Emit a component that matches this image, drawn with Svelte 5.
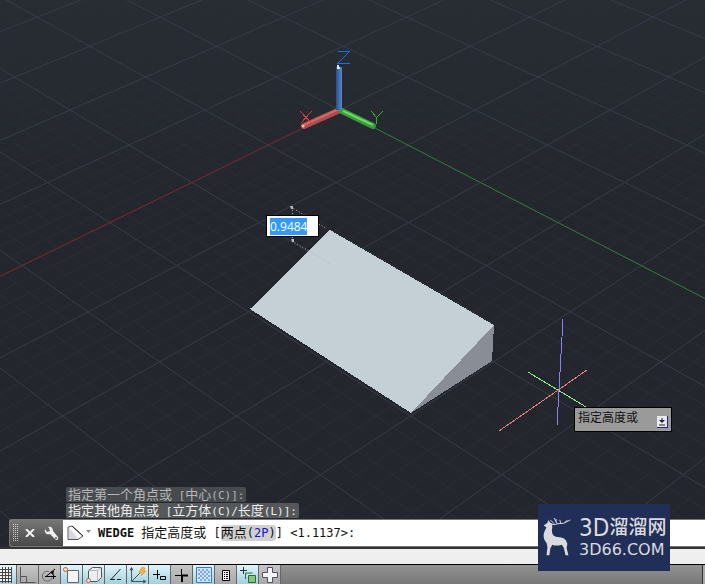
<script lang="ts">
  import { onMount } from "svelte";

  type Point = [number, number];
  type Line = { a: Point; b: Point };

  // Perspective of the ground plane: i runs along X, j runs along Y.
  function project(i: number, j: number): Point {
    const s = i + j;
    const w = 1 - 0.032 * s;
    return [(340 - 12.7 * s + 67.5 * (j - i)) / w, (110 + 30.4 * s) / w];
  }

  const DIV = 5;
  const major: Line[] = [];
  const minor: Line[] = [];
  for (let n = -10 * DIV; n <= 14 * DIV; n++) {
    const c = n / DIV;
    const list = n % DIV === 0 ? major : minor;
    list.push({ a: project(c, -5 - c), b: project(c, 11 - c) });
    list.push({ a: project(-5 - c, c), b: project(11 - c, c) });
  }
  const xAxis: Line = { a: project(0, 0), b: project(6, 0) };
  const yAxis: Line = { a: project(0, 0), b: project(0, 8) };

  let height = $state("0.9484");
  let heightInput: HTMLInputElement;

  let modes = $state([
    { id: "grid", label: "栅格显示", on: true },
    { id: "ortho", label: "正交模式", on: false },
    { id: "polar", label: "极轴追踪", on: false },
    { id: "osnap", label: "对象捕捉", on: true },
    { id: "osnap3d", label: "三维对象捕捉", on: true },
    { id: "otrack", label: "对象捕捉追踪", on: true },
    { id: "ducs", label: "动态 UCS", on: true },
    { id: "dyn", label: "动态输入", on: true },
    { id: "lwt", label: "线宽", on: false },
    { id: "tpy", label: "透明度", on: true },
    { id: "qp", label: "快捷特性", on: false },
    { id: "sc", label: "选择循环", on: true },
    { id: "am", label: "注释监视器", on: false },
  ]);

  onMount(() => {
    heightInput.focus();
    heightInput.select();
  });
</script>

{#snippet gridLines(lines: Line[], cls: string)}
  <g class={cls}>
    {#each lines as l}
      <line x1={l.a[0]} y1={l.a[1]} x2={l.b[0]} y2={l.b[1]} />
    {/each}
  </g>
{/snippet}

<main class="app">
  <section class="viewport">
    <svg class="canvas" aria-hidden="true">
      <defs>
        <linearGradient id="zbar">
          <stop offset="0" stop-color="#2a4c85" />
          <stop offset="0.5" stop-color="#3f6fb4" />
          <stop offset="1" stop-color="#6284b4" />
        </linearGradient>
      </defs>
      {@render gridLines(minor, "minor")}
      {@render gridLines(major, "major")}
      <line class="x-axis" x1={xAxis.a[0]} y1={xAxis.a[1]} x2={xAxis.b[0]} y2={xAxis.b[1]} />
      <line class="y-axis" x1={yAxis.a[0]} y1={yAxis.a[1]} x2={yAxis.b[0]} y2={yAxis.b[1]} />

      <!-- UCS icon -->
      <path d="M340 110 L304 126" stroke="#b04a4d" stroke-width="6" stroke-linecap="round" />
      <path d="M339 109 L304 125" stroke="#cc6a6c" stroke-width="2" />
      <path d="M342 111 L373 126" stroke="#359c38" stroke-width="6" stroke-linecap="round" />
      <path d="M343 111 L373 125" stroke="#6fd36f" stroke-width="2" />
      <rect x="336" y="67" width="6" height="43" fill="url(#zbar)" />
      <path d="M337 68h3M338 65v3" stroke="#d8ecff" stroke-width="2" />
      <circle cx="303" cy="126" r="1.500" fill="#ffb0b0" />
      <g fill="none" stroke-width="1" shape-rendering="crispEdges">
        <path d="M337.500 51.500h12l-12 12h12" stroke="#1d6fe0" />
        <path d="M300.500 111.500l11 12M311.500 111.500l-11 12" stroke="#d83a3a" />
        <path d="M371.500 111.500l5 6l6 -6M376.500 117.500v6" stroke="#2fb52f" />
      </g>

      <!-- wedge -->
      <g shape-rendering="crispEdges">
        <path d="M330 230L494 325L411 413L250 309Z" fill="#c5d0d6" />
        <path d="M494 325L492 361L411 413Z" fill="#888d96" />
      </g>
      <g class="dim">
        <path d="M291 207L327 229" />
        <path d="M292 241L331 264" />
        <path d="M292.500 207V241" />
      </g>
      <path d="M290 206h3v3h-2zM291 239h3v3h-2z" fill="#b5b8bb" />

      <!-- crosshair -->
      <g shape-rendering="crispEdges">
        <path d="M499 431L587 370" stroke="#e87c7c" />
        <path d="M528 372L586 407" stroke="#8cf08c" />
        <path d="M563 319L557 425" stroke="#8684ee" />
      </g>
    </svg>

    <input class="height-input" aria-label="高度" bind:this={heightInput} bind:value={height} />
    <div class="prompt-tip">
      <span>指定高度或</span>
      <svg width="11" height="12" viewBox="0 0 11 12">
        <path d="M0 0h11v12h-11z" fill="#2020a0" />
        <path d="M0 0h10v11h-10z" fill="#e8e8f4" />
        <path d="M4.500 2h1v2h2v1h-1v1h-1v1h-1v-1h-1v-1h-1v-1h2zM2 8.500h6v1h-6z" fill="#222" />
      </svg>
    </div>

    <div class="command">
      <p class="history old">指定第一个角点或<kbd>{" ["}</kbd>中心<kbd>(C)]:</kbd></p>
      <p class="history">指定其他角点或<kbd>{" ["}</kbd>立方体<kbd>(C)/</kbd>长度<kbd>(L)]:</kbd></p>
      <div class="command-line">
        <div class="handle">
          <svg class="grip" width="6" height="18" viewBox="0 0 6 18" aria-hidden="true">
            {#each [0, 2, 4] as x}
              {#each [0, 2, 4, 6, 8, 10, 12, 14, 16] as y}
                <rect {x} {y} width="1" height="1" />
              {/each}
            {/each}
          </svg>
          <button aria-label="关闭">
            <svg width="10" height="8" viewBox="0 0 10 8"><path d="M1 0L9 8M9 0L1 8" stroke="#f2f2f2" stroke-width="2" /></svg>
          </button>
          <button aria-label="自定义">
            <svg width="15" height="15" viewBox="0 0 15 15">
              <path d="M1 3L3 6L6 5L5 2L4 1C7 0 9 2 9 5L14 11Q15 14 12 14L6 8C3 9 0 7 1 3Z" fill="#f0f0f0" />
              <circle cx="12" cy="12" r="1" fill="#555" />
            </svg>
          </button>
        </div>
        <button class="recent" aria-label="最近使用的命令">
          <svg width="24" height="16" viewBox="0 0 24 16">
            <path d="M1 2L5 1L16 11L11 14.500H1Z" fill="#f7f7f7" stroke="#555" stroke-linejoin="round" />
            <path d="M2 3L11 14H2Z" fill="#d5d8e0" />
            <path d="M5 1L16 11" stroke="#222" />
            <path d="M19 5h5l-2.500 3z" fill="#888" />
          </svg>
        </button>
        <div class="prompt">
          <kbd><b>WEDGE</b>{" "}</kbd>指定高度或<kbd>{" ["}</kbd><button class="option">两点<kbd>(<em>2P</em>)</kbd></button><kbd>{"] <1.1137>:"}</kbd>
        </div>
      </div>
    </div>
  </section>

  <div class="tabs"></div>

  <footer class="status">
    {#each modes as m}
      <button class="mode {m.id}" class:on={m.on} aria-pressed={m.on} aria-label={m.label} title={m.label} onclick={() => (m.on = !m.on)}>
        <svg width="22" height="20" viewBox="0 0 22 20" fill="none" stroke="#222">
          {#if m.id === "grid"}
            <path d="M4 3h13v14h-13z" fill="#f4f4f4" stroke="none" />
            <path d="M5.500 2v16M8.500 2v16M11.500 2v16M14.500 2v16M17.500 2v16M4 4.500h14M4 7.500h14M4 10.500h14M4 13.500h14M4 16.500h14" stroke="#444" />
          {:else if m.id === "ortho"}
            <path d="M3.500 2v15.500h15M3.500 11.500h6v6" stroke="#555" />
          {:else if m.id === "polar"}
            <path d="M10 6.500A5 5 0 1 0 13 13" stroke="#666" />
            <path d="M6 11.500h11M7 11.500L16 4M12.500 7q3 2 2 7" stroke="#000" />
            <path d="M11 7l4 -1l-1 4z" fill="#000" stroke="none" />
          {:else if m.id === "osnap"}
            <path d="M6.500 5.500h11v12h-11z" fill="#f3f3f6" stroke="#666" />
            <circle cx="4.500" cy="4.500" r="2" fill="#fbe6dd" stroke="#cf5a35" />
          {:else if m.id === "osnap3d"}
            <path d="M5.500 5.500l4 -3h9v10l-4 4h-9z" fill="#eceef3" stroke="#555" />
            <path d="M5.500 5.500h9v11M14.500 5.500l4 -3" stroke="#b5b8c0" />
            <circle cx="5.500" cy="15.500" r="2" fill="#fbe6dd" stroke="#cf5a35" />
          {:else if m.id === "otrack"}
            <path d="M15.500 4L6 14.500" />
            <path d="M5 14.500h5M12 14.500h4" />
          {:else if m.id === "ducs"}
            <path d="M4.500 3v13.500h14M4.500 16.500L13 8M3 5.500l1.500 -3l1.500 3M16 15l3 1.500l-3 1.500" stroke="#3d5560" />
            <path d="M15 2l3 1l-1 3h2l-5 5l1 -3l-3 -1z" fill="#fbb232" stroke="#e08a20" stroke-width="0.500" />
          {:else if m.id === "dyn"}
            <path d="M4 9.500h7M8.500 5v9M11.500 11.500h5v3h-5z" stroke="#000" />
          {:else if m.id === "lwt"}
            <path d="M4 10.500h7M10.500 4v6" stroke="#000" />
            <path d="M10 10.500h7M11 10v7" stroke="#000" stroke-width="2" />
          {:else if m.id === "tpy"}
            <path d="M3.500 2.500h15v15h-15z" fill="#cfe4f7" stroke="#3b78b5" />
            {#each [0, 1, 2, 3, 4, 5] as r}
              {#each [0, 1, 2] as c}
                <rect x={5 + c * 4 + (r % 2) * 2} y={4 + r * 2} width="2" height="2" fill="#7fabd8" stroke="none" />
              {/each}
            {/each}
          {:else if m.id === "qp"}
            <path d="M7.500 5.500h7v10h-7z" fill="#f4f4f4" stroke="#000" />
            <path d="M9 7.500h1M11 7.500h2M9 9.500h1M11 9.500h2M9 11.500h1M11 11.500h2M9 13.500h1M11 13.500h2" stroke="#000" />
          {:else if m.id === "sc"}
            <path d="M3 5.500h7M6.500 2v7" stroke="#234" />
            <path d="M8.500 14v-6h7" stroke="#2c7338" />
            <path d="M11.500 10.500h7v7h-7z" fill="#8cc47c" stroke="#2c6a36" />
          {:else}
            <path d="M8.500 2.500h5v5h5v5h-5v5h-5v-5h-5v-5h5z" fill="#f4f4f8" stroke="#4d5060" />
          {/if}
        </svg>
      </button>
    {/each}
    <span class="status-end"></span>
  </footer>

  <a class="brand" href="#3d66">
    <svg width="32" height="40" viewBox="0 0 32 42" aria-hidden="true">
      <path d="M2 8L6 5L7 2L9 5L11 6L11 10Q10 15 12 18C15 21 22 19 25 23Q28 27 26 31L28 39H25L23 31L21 28Q15 30 11 28L9 32L8 39H5L6 31L5 26C1 22 1 16 5 10Z" fill="#d9dade" />
      <path d="M9 6Q13 8 17 6Q23 7 30 2M13 6L9 2M16 6L13 0M20 6L19 2M24 5L27 2M15 4V1" fill="none" stroke="#d9dade" />
    </svg>
    <span class="brand-text">
      <span class="brand-name">3D<b>溜溜网</b></span>
      <span class="brand-site">3D66.COM</span>
    </span>
  </a>
</main>

<style>
  :global(body) {
    margin: 0;
  }
  .app {
    position: relative;
    display: flex;
    flex-direction: column;
    height: 100vh;
    overflow: hidden;
    font: 13px/16px "Liberation Sans", "Noto Sans CJK SC", sans-serif;
    color: #111;
  }
  button {
    border: 0;
    padding: 0;
    background: none;
    font: inherit;
    color: inherit;
  }
  svg {
    display: block;
  }
  kbd {
    font-family: "DejaVu Sans Mono", monospace;
    font-size: 12px;
    line-height: 12px;
    white-space: pre;
  }
  .viewport {
    position: relative;
    flex: 1;
    min-height: 0;
    display: flex;
    flex-direction: column;
    justify-content: flex-end;
    background: linear-gradient(#282c33, #23272d 40%);
    overflow: hidden;
  }
  .canvas {
    position: absolute;
    inset: 0;
    width: 100%;
    height: 100%;
  }
  .minor {
    stroke: #292d34;
  }
  .major {
    stroke: #373c4a;
  }
  .x-axis {
    stroke: #7a2329;
  }
  .y-axis {
    stroke: #2a7a30;
  }
  .dim {
    fill: none;
    stroke: #b0b3b6;
    stroke-dasharray: 1 2;
  }
  .height-input {
    position: absolute;
    left: 266px;
    top: 215px;
    width: 53px;
    height: 22px;
    box-sizing: border-box;
    padding: 0 3px;
    border: 1px solid #000;
    outline: 0;
    background: #fff;
    font: 12px/18px "Open Sans", sans-serif;
  }
  .height-input::selection {
    background: #3399ff;
    color: #fff;
  }
  .prompt-tip {
    position: absolute;
    left: 574px;
    top: 407px;
    width: 98px;
    height: 25px;
    box-sizing: border-box;
    display: flex;
    justify-content: space-between;
    padding: 2px 3px 0 3px;
    border: 1px solid #000;
    background: #9a9a9a;
    font-size: 12px;
  }
  .prompt-tip svg {
    margin-top: 6px;
  }
  .command {
    position: relative;
    display: flex;
    flex-direction: column;
    align-items: flex-start;
    padding-left: 9px;
  }
  .history {
    margin: 0 0 1px 57px;
    padding: 0 2px;
    height: 15px;
    line-height: 15px;
    border-radius: 2px;
    background: #55585b;
    color: #eee;
    white-space: nowrap;
  }
  .history kbd {
    font-size: 11px;
  }
  .history.old {
    background: #484b4e;
    color: #b5b7b9;
  }
  .command-line {
    align-self: stretch;
    display: flex;
    height: 26px;
    border: 1px solid #777;
    border-right: 0;
    border-radius: 3px 0 0 3px;
    background: #fff;
    overflow: hidden;
  }
  .handle {
    display: flex;
    align-items: center;
    gap: 9px;
    width: 53px;
    padding-left: 3px;
    box-sizing: border-box;
    background: linear-gradient(#777, #484848);
  }
  .handle .grip {
    margin-right: -3px;
    fill: #ccc;
  }
  .recent {
    width: 30px;
    padding-left: 4px;
  }
  .prompt {
    display: flex;
    align-items: center;
    padding-left: 5px;
    white-space: nowrap;
  }
  .option {
    border-radius: 3px;
    background: #d0d0d0;
  }
  .option em {
    font-style: normal;
    color: #1414c8;
  }
  .tabs {
    height: 15px;
    border-top: 2px solid #333;
    background: #efefef;
  }
  .status {
    display: flex;
    height: 19px;
    border-top: 1px solid #000;
    background: linear-gradient(#929292, #787878);
    overflow: hidden;
  }
  .mode {
    flex: none;
    width: 22px;
    height: 20px;
    box-sizing: border-box;
    border-right: 1px solid #666;
    background: linear-gradient(#c6c6c6, #a6a6a6);
  }
  .mode.on {
    background: linear-gradient(#e2f5fb, #9dcfdd);
  }
  .mode.grid {
    display: flex;
    justify-content: flex-end;
    width: 17px;
  }
  .mode.grid svg {
    flex: none;
  }
  .status-end {
    width: 2px;
    margin-left: auto;
    border-left: 1px solid #333;
    background: #aaa;
  }
  .brand {
    position: absolute;
    right: 35px;
    bottom: 13px;
    display: flex;
    align-items: center;
    gap: 6px;
    width: 132px;
    height: 67px;
    box-sizing: border-box;
    padding-left: 3px;
    background: #212f58;
    color: #d9dade;
    text-decoration: none;
  }
  .brand-text {
    display: flex;
    flex-direction: column;
    white-space: nowrap;
  }
  .brand-name {
    display: flex;
    align-items: center;
    height: 24px;
    font: 24px/24px "DejaVu Sans Condensed", "DejaVu Sans", sans-serif;
  }
  .brand-name b {
    font: 500 19px/24px "Liberation Sans", "Noto Sans CJK SC", sans-serif;
  }
  .brand-site {
    font: 16px/20px "DejaVu Sans", sans-serif;
  }
</style>
